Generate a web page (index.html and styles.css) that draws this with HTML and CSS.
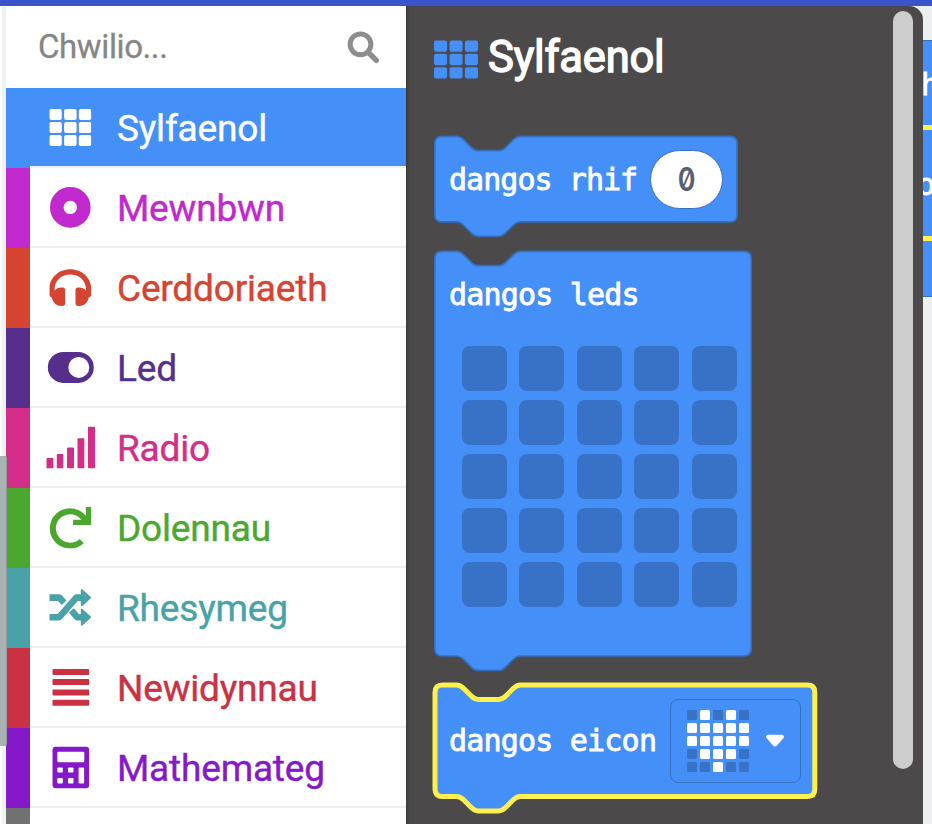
FILE: index.html
```html
<!DOCTYPE html>
<html lang="cy">
<head>
<meta charset="utf-8">
<title>Sylfaenol</title>
<link rel="stylesheet" href="styles.css">
</head>
<body>
<header class="topbar"></header>
<main class="editor">
  <div class="gutter"><div class="gutter-thumb"></div></div>
  <nav class="toolbox">
    <div class="search">
      <span class="search-text">Chwilio...</span>
      <svg class="search-icon" width="34" height="34" viewBox="0 0 34 34"><circle cx="14.500" cy="14.300" r="10.400" fill="none" stroke="currentColor" stroke-width="5"/><path d="M23 23L30.300 30.300" stroke="currentColor" stroke-width="5.400" stroke-linecap="round"/></svg>
    </div>
    <ul class="categories">
      <li class="category basic selected"><div class="row"><span class="icon"><svg width="42" height="38" viewBox="0 0 42 38"><use href="#grid"/></svg></span><span class="label">Sylfaenol</span></div></li>
      <li class="category input"><div class="row"><span class="icon"><svg width="42" height="42" viewBox="0 0 42 42"><circle cx="21" cy="21" r="13.5" fill="none" stroke="currentColor" stroke-width="13.6"/></svg></span><span class="label">Mewnbwn</span></div></li>
      <li class="category music"><div class="row"><span class="icon"><svg width="42" height="38" viewBox="0 0 42 38"><path d="M21 .8C9.400.8 0 9.500 0 20.500V26c0 1 .6 2 1.500 2.500l1 .5C3.500 34 7.500 37.500 12 37.500h1.500c1.300 0 2.300-1 2.300-2.300V21.300c0-1.300-1-2.300-2.300-2.300H12c-2.700 0-5 1-6.700 3v-1.500C5.300 12 12.300 6 21 6s15.700 6 15.700 14.500V22C35 20 32.700 19 30 19h-1.500c-1.300 0-2.300 1-2.300 2.300v13.900c0 1.300 1 2.300 2.300 2.300H30c4.500 0 8.500-3.500 9.500-8.500l1-.5C41.400 28 42 27 42 26v-5.500C42 9.500 32.600.8 21 .8z" fill="currentColor"/></svg></span><span class="label">Cerddoriaeth</span></div></li>
      <li class="category led"><div class="row"><span class="icon"><svg width="47" height="32" viewBox="0 0 47 32"><path fill-rule="evenodd" d="M16 .5h15a15.500 15.500 0 0 1 0 31H16a15.500 15.500 0 0 1 0-31zM31.500 5.500a10.500 10.500 0 1 0 0 21a10.500 10.500 0 0 0 0-21z" fill="currentColor"/></svg></span><span class="label">Led</span></div></li>
      <li class="category radio"><div class="row"><span class="icon"><svg width="49" height="42" viewBox="0 0 49 42"><g fill="currentColor"><rect x="0" y="31.500" width="7" height="10.500" rx="1"/><rect x="10.500" y="27.500" width="6.500" height="14.500" rx="1"/><rect x="20.700" y="21" width="7" height="21" rx="1"/><rect x="31.200" y="11.800" width="6.800" height="30.200" rx="1"/><rect x="41.700" y="0" width="7" height="42" rx="1"/></g></svg></span><span class="label">Radio</span></div></li>
      <li class="category loops"><div class="row"><span class="icon"><svg width="42" height="42" viewBox="0 0 42 42"><path d="M35.500 13.200A17.200 17.200 0 1 0 32.400 34.700" fill="none" stroke="currentColor" stroke-width="6"/><path d="M36.500.5H41.800V18.500H23.800V13.300H33L36.500 10z" fill="currentColor"/></svg></span><span class="label">Dolennau</span></div></li>
      <li class="category logic"><div class="row"><span class="icon"><svg width="42" height="38" viewBox="0 0 42 38"><g fill="none" stroke="currentColor" stroke-width="6.600" stroke-linejoin="round"><path d="M0 28.800H10L27 9.200H34"/><path d="M0 9.200H10L14.800 14.300"/><path d="M22 22L28 28.800H34"/></g><path d="M31.500 2.200Q31.500-.5 33.700 1.500L41.500 8.700Q42 9.300 41.500 9.800L33.700 17Q31.500 19 31.500 16zM31.500 21.800Q31.500 19 33.700 21L41.500 28.200Q42 28.800 41.500 29.400L33.700 36.600Q31.500 38.500 31.500 35.800z" fill="currentColor"/></svg></span><span class="label">Rhesymeg</span></div></li>
      <li class="category vars"><div class="row"><span class="icon"><svg width="37" height="38" viewBox="0 0 37 38"><g fill="currentColor"><rect y=".5" width="37" height="6" rx="1.200"/><rect y="10.700" width="37" height="6" rx="1.200"/><rect y="21" width="37" height="6" rx="1.200"/><rect y="31.300" width="37" height="6" rx="1.200"/></g></svg></span><span class="label">Newidynnau</span></div></li>
      <li class="category maths"><div class="row"><span class="icon"><svg width="37" height="42" viewBox="0 0 37 42"><rect width="37" height="42" rx="4" fill="currentColor"/><g fill="#fff"><rect x="5" y="5.300" width="27" height="10.500" rx="1.200"/><rect x="5" y="21.200" width="5.500" height="5" rx="1"/><rect x="15.700" y="21.200" width="5.500" height="5" rx="1"/><rect x="5" y="31.500" width="5.500" height="5.500" rx="1"/><rect x="15.700" y="31.500" width="5.500" height="5.500" rx="1"/><rect x="26.300" y="21.200" width="5.500" height="15.800" rx="1"/></g></svg></span><span class="label">Mathemateg</span></div></li>
      <li class="category more"><div class="row"></div></li>
    </ul>
  </nav>

  <section class="flyout">
    <h2 class="flyout-title"><svg class="title-icon" width="44" height="39" viewBox="0 0 42 38" preserveAspectRatio="none"><use href="#grid"/></svg><span class="title-text">Sylfaenol</span></h2>

    <div class="block number-block">
      <svg class="shape" width="304" height="102"><path d="M.8 7.500Q.8.300 8 .300H22.600c3.600 0 5.400 1.800 7.200 3.600l7.200 7.200c1.800 1.800 3.600 3.600 7.200 3.600h20.600c3.600 0 5.400-1.800 7.200-3.600l7.200-7.200c1.800-1.800 3.600-3.600 7.200-3.600H295.900q7.200 0 7.200 7.200V78.700q0 7.200-7.200 7.200H86.200c-3.600 0-5.400 1.800-7.200 3.600l-7.200 7.200c-1.800 1.800-3.600 3.600-7.200 3.600H44.200c-3.600 0-5.400-1.800-7.200-3.600l-7.200-7.200c-1.800-1.800-3.600-3.600-7.200-3.600H8Q.8 85.900.8 78.700z"/></svg>
      <span class="block-text">dangos rhif</span><span class="number"><b>0</b></span>
    </div>

    <div class="block leds-block">
      <svg class="shape" width="318" height="422"><path d="M.8 7.500Q.8.300 8 .300H22.600c3.600 0 5.400 1.800 7.200 3.600l7.200 7.200c1.800 1.800 3.600 3.600 7.200 3.600h20.600c3.600 0 5.400-1.800 7.200-3.600l7.200-7.200c1.800-1.800 3.600-3.600 7.200-3.600H310q7.200 0 7.200 7.200V397.800q0 7.200-7.200 7.200H86.200c-3.600 0-5.400 1.800-7.200 3.600l-7.200 7.200c-1.800 1.800-3.600 3.600-7.200 3.600H44.200c-3.600 0-5.400-1.800-7.200-3.600l-7.200-7.200c-1.800-1.800-3.600-3.600-7.200-3.600H8Q.8 405 .8 397.800z"/></svg>
      <span class="block-text">dangos leds</span>
      <div class="leds"><i></i><i></i><i></i><i></i><i></i><i></i><i></i><i></i><i></i><i></i><i></i><i></i><i></i><i></i><i></i><i></i><i></i><i></i><i></i><i></i><i></i><i></i><i></i><i></i><i></i></div>
    </div>

    <div class="block icon-block">
      <svg class="shape highlighted" width="384" height="130"><path d="M1 7.200Q1 0 8.200 0H22.600c3.600 0 5.400 1.800 7.200 3.600l7.200 7.200c1.800 1.800 3.600 3.600 7.200 3.600h20.600c3.600 0 5.400-1.800 7.200-3.600l7.200-7.200c1.800-1.800 3.600-3.600 7.200-3.600H373.600q7.200 0 7.200 7.200V104.300q0 7.200-7.200 7.200H86.200c-3.600 0-5.400 1.800-7.200 3.600l-7.200 7.200c-1.800 1.800-3.600 3.600-7.200 3.600H44.200c-3.600 0-5.400-1.800-7.200-3.600l-7.200-7.200c-1.800-1.800-3.600-3.600-7.200-3.600H8.200Q1 111.500 1 104.300z"/></svg>
      <span class="block-text">dangos eicon</span>
      <div class="icon-field">
        <div class="heart"><i></i><i class="on"></i><i></i><i class="on"></i><i></i><i class="on"></i><i class="on"></i><i class="on"></i><i class="on"></i><i class="on"></i><i class="on"></i><i class="on"></i><i class="on"></i><i class="on"></i><i class="on"></i><i></i><i class="on"></i><i class="on"></i><i class="on"></i><i></i><i></i><i></i><i class="on"></i><i></i><i></i></div>
        <svg class="caret" width="20" height="13" viewBox="0 0 20 13"><path d="M3 .7H17Q20 1.300 18.500 4L12 11.500Q10 13.300 8 11.500L1.500 4Q0 1.300 3 .7z"/></svg>
      </div>
    </div>
    <div class="scrollbar"></div>
  </section>

  <section class="workspace">
    <div class="loop-block">
      <div class="part first"><span>h</span></div>
      <div class="part second"><span>o</span></div>
      <div class="part last"></div>
    </div>
  </section>
</main>

<svg class="symbols" width="0" height="0">
  <symbol id="grid" viewBox="0 0 42 38"><g fill="currentColor"><rect x="0" y=".5" width="12.500" height="11" rx="2"/><rect x="14.800" y=".5" width="12.500" height="11" rx="2"/><rect x="29.500" y=".5" width="12.500" height="11" rx="2"/><rect x="0" y="13.500" width="12.500" height="11" rx="2"/><rect x="14.800" y="13.500" width="12.500" height="11" rx="2"/><rect x="29.500" y="13.500" width="12.500" height="11" rx="2"/><rect x="0" y="26.500" width="12.500" height="11" rx="2"/><rect x="14.800" y="26.500" width="12.500" height="11" rx="2"/><rect x="29.500" y="26.500" width="12.500" height="11" rx="2"/></g></symbol>
</svg>
</body>
</html>
```
FILE: styles.css
```css
* { box-sizing: border-box; }
body {
  margin: 0;
  height: 824px;
  overflow: hidden;
  background: #ecf0f1;
  font-family: Roboto, "Liberation Sans", sans-serif;
}
.topbar { height: 6px; background: #3a54cb; }
.editor { display: flex; height: 818px; position: relative; overflow: hidden; }
.symbols { position: absolute; }

.gutter { width: 6px; flex: none; background: #eff1f3; border-left: 2px solid #fff; }
.gutter-thumb {
  position: absolute;
  z-index: 2;
  left: 0;
  top: 450px;
  width: 7px;
  height: 290px;
  background: #a9b2b3;
  border-right: 1px solid #929b9e;
  border-radius: 0 2px 2px 0;
}

.toolbox { width: 400px; flex: none; background: #fff; }
.search {
  height: 82px;
  padding: 0 26px 0 32px;
  display: flex;
  align-items: center;
  justify-content: space-between;
  color: #8d8d8d;
}
.search-text { font-size: 33px; line-height: 40px; letter-spacing: -0.4px; color: #858585; -webkit-text-stroke: 0.3px currentColor; }
.categories { list-style: none; margin: 0; padding: 0; }
.category { height: 80px; border-left: 24px solid currentColor; }
.row {
  height: 80px;
  display: flex;
  align-items: center;
  border-bottom: 2px solid #ecf0f1;
}
.icon { width: 80px; display: flex; justify-content: center; }
.icon svg { display: block; transform: translate(0.3px, 0.4px); }
.label {
  margin-left: 7px;
  font-size: 37px;
  line-height: 44px;
  letter-spacing: -0.18px;
  padding-top: 3px;
  -webkit-text-stroke: 0.4px currentColor;
}
.basic { color: #458ff8; }
.selected .row { background: #458ff8; color: #fff; }
.input { color: #c128cd; }
.music { color: #d54331; }
.led { color: #562f8c; }
.radio { color: #d32d88; }
.loops { color: #4ca72f; }
.logic { color: #49a2a7; }
.vars { color: #ca3143; }
.maths { color: #8519ca; }
.more { color: #717171; }

.flyout {
  position: relative;
  z-index: 1;
  width: 517px;
  height: 818px;
  flex: none;
  padding-left: 28px;
  background: #4b4949;
  border-radius: 0 14px 0 0;
  box-shadow: inset 3px 0 3px -2px #333;
}
.flyout-title {
  margin: 0;
  height: 130px;
  padding-top: 25px;
  display: flex;
  align-items: flex-start;
  color: #458ff8;
}
.title-icon { margin-top: 9px; }
.title-text {
  margin: 1px 0 0 10px;
  font-size: 43.5px;
  line-height: 52px;
  font-weight: 400;
  letter-spacing: -0.2px;
  -webkit-text-stroke: 1.4px #fff;
  color: #fff;
}

.block { position: relative; }
.shape { position: absolute; left: 0; top: 0; overflow: visible; fill: #458ff8; stroke: #3570bf; stroke-width: 1.7px; }
.highlighted { stroke: #fff04f; stroke-width: 5px; }
.block-text {
  position: relative;
  font: 30px/36px "DejaVu Sans Mono", monospace;
  letter-spacing: -0.8px;
  -webkit-text-stroke: 0.8px #fff;
  color: #fff;
  white-space: pre;
}
.number-block { height: 86px; display: flex; align-items: center; padding-left: 15px; margin-bottom: 29px; }
.number-block .block-text { padding-top: 2px; letter-spacing: -0.95px; }
.number {
  position: relative;
  width: 73px;
  height: 59px;
  margin-left: 12.5px;
  border: 1.5px solid #3570bf;
  border-radius: 30px;
  background: #fff;
  color: #575e75;
  font: 32px/57px Inter, sans-serif;
  font-feature-settings: "zero";
  text-align: center;
}
.number b { display: inline-block; font-weight: 600; transform: scaleX(0.84); }
.leds-block { height: 405px; padding: 26px 0 0 15px; margin-bottom: 29px; display: flex; flex-direction: column; }
.leds {
  position: relative;
  margin: 33px 0 0 12.5px;
  display: grid;
  grid-template-columns: repeat(5, 45px);
  grid-auto-rows: 45px;
  gap: 9px 12.6px;
}
.leds i { background: #3872c6; border-radius: 8px; }
.icon-block { height: 111px; display: flex; align-items: center; padding-left: 15px; }
.icon-field {
  position: relative;
  width: 131px;
  height: 84px;
  margin-left: 14px;
  padding-left: 16px;
  display: flex;
  align-items: center;
  border: 1.5px solid #3570bf;
  border-radius: 8px;
}
.heart { display: grid; grid-template-columns: repeat(5, 10px); grid-auto-rows: 10px; gap: 3px; }
.heart i { background: #3872c6; border-radius: 1.5px; }
.heart .on { background: #fff; }
.caret { margin-left: 16px; fill: #fff; }

.scrollbar {
  position: absolute;
  left: 487px;
  top: 5px;
  width: 20px;
  height: 758px;
  border-radius: 10px;
  background: #cdcdcd;
}

.workspace { flex: 1; padding-top: 34px; }
.loop-block { height: 257px; background: #458ff8; border: solid #3570bf; border-width: 1.5px 0; color: #fff; font: 30px/36px "DejaVu Sans Mono", monospace; }
.part { overflow: hidden; }
.part span { display: block; margin-left: -2px; -webkit-text-stroke: 0.8px #fff; }
.first { height: 89px; padding-top: 26px; border-bottom: 5px solid #fff04f; }
.second { height: 111px; padding-top: 37px; border-bottom: 5px solid #fff04f; }
.second span { margin-left: -6px; }
```
